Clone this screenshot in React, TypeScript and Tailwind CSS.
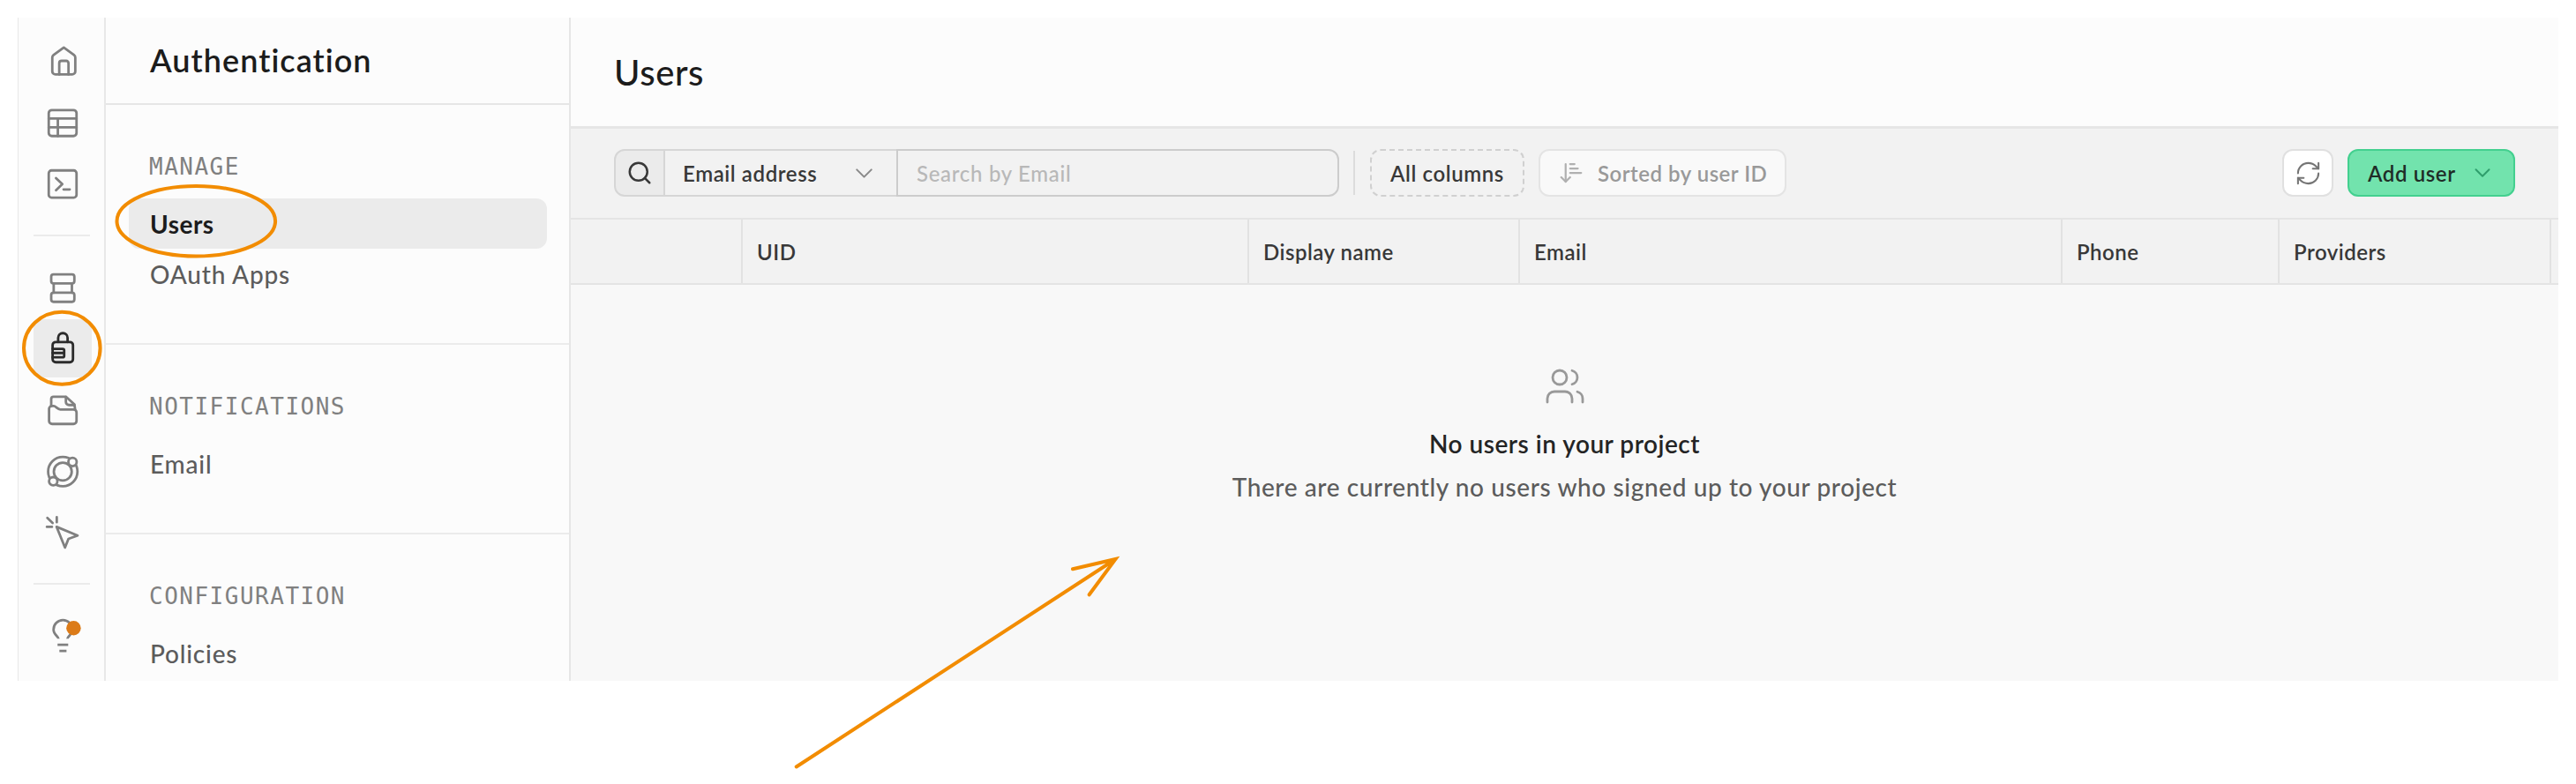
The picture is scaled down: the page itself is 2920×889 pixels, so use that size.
import React from "react";
import { ArrowDownNarrowWide, ChevronDown, RefreshCw, Search, Users } from "lucide-react";

type IconProps = { children: React.ReactNode; className?: string };

const RailIcon = ({ children, className = "text-[#808080]" }: IconProps) => (
  <svg
    viewBox="0 0 24 24"
    fill="none"
    stroke="currentColor"
    strokeWidth="1.6"
    strokeLinecap="round"
    strokeLinejoin="round"
    className={`h-[42px] w-[42px] ${className}`}
  >
    {children}
  </svg>
);

const Rail = () => (
  <nav className="flex w-[100px] shrink-0 flex-col items-center border-l border-r-2 border-[#e8e8e8] pt-[14px] pl-[3px]">
    <div className="flex h-[70px] items-center">
      <RailIcon>
        <path d="M5.3 9.8a2 2 0 0 1 .8-1.6l6.65-4.8 6.65 4.8a2 2 0 0 1 .8 1.6v9a2 2 0 0 1-2 2H7.3a2 2 0 0 1-2-2Z" />
        <path d="M9.8 20.8v-7.3A1.5 1.5 0 0 1 11.3 12h3a1.5 1.5 0 0 1 1.5 1.5v7.3" />
      </RailIcon>
    </div>
    <div className="flex h-[70px] items-center">
      <RailIcon>
        <rect x="3" y="3.9" width="18" height="16.8" rx="2" />
        <path d="M3 9.4h18M3 15.1h18M8.9 9.4v11.3" />
      </RailIcon>
    </div>
    <div className="flex h-[70px] items-center">
      <RailIcon>
        <rect x="3" y="3" width="18" height="17.6" rx="1.8" />
        <path d="m7.7 8 4.1 3.9-4.1 3.9M12.6 15.3h4" />
      </RailIcon>
    </div>
    <div className="mt-[22px] mr-0.5 mb-6 h-0.5 w-16 bg-[#ebebeb]" />
    <div className="flex h-[69px] items-center">
      <RailIcon>
        <rect x="4.6" y="2.9" width="15" height="5.9" rx="1.5" />
        <rect x="4.6" y="14.8" width="15" height="5.9" rx="1.5" />
        <path d="M6.2 8.8v6M18 8.8v6" />
      </RailIcon>
    </div>
    <div className="flex h-[69px] items-center">
      <div className="mb-0.5 flex h-[66px] w-[66px] items-center justify-center rounded-xl bg-[#ebebeb]">
        <RailIcon className="text-[#2b2b2b]">
          <rect x="5.5" y="7.9" width="13.2" height="13.1" rx="2" />
          <path d="M9.1 7.9V5.2a3.05 3.05 0 0 1 6.1 0v2.7" />
          <path d="M5.5 12.3H12a1 1 0 0 1 1 1v3.5a1 1 0 0 1-1 1H5.5M5.5 15H13" />
        </RailIcon>
      </div>
    </div>
    <div className="flex h-[69px] items-center">
      <RailIcon>
        <path d="M4.6 9.4V4.8a1.5 1.5 0 0 1 1.5-1.5h8l5.5 5 .5 3.2" />
        <path d="M14.1 3.5v3.2a2 2 0 0 0 2 2h3.5" />
        <path d="M3.2 11.2A1.8 1.8 0 0 1 5 9.4h1.2c1.5 0 2.3 2.2 4.3 2.2H19a2 2 0 0 1 2 2V19a2 2 0 0 1-2 2H5.2a2 2 0 0 1-2-2Z" />
      </RailIcon>
    </div>
    <div className="flex h-[69px] items-center">
      <RailIcon>
        <circle cx="12.1" cy="12.4" r="9.5" />
        <circle cx="12.1" cy="12.4" r="5.8" />
        <circle cx="18.4" cy="6.2" r="2.7" fill="#fcfcfc" />
        <circle cx="5.9" cy="18.7" r="2.7" fill="#fcfcfc" />
      </RailIcon>
    </div>
    <div className="flex h-[69px] items-center">
      <RailIcon>
        <path d="m8.1 8.8 13.6 5.6-5.9 2.2-2.3 5.6Z" />
        <path d="M8.2 2.5v3.3M2.1 3l3.4 3.3M1.8 8.8h3.3" />
      </RailIcon>
    </div>
    <div className="mt-6 mr-0.5 mb-[22px] h-0.5 w-16 bg-[#ebebeb]" />
    <div className="flex h-[69px] items-center">
      <RailIcon>
        <path d="M9.3 14.4c0-1.3-3.2-2.8-3.2-5.9a6.1 6.1 0 0 1 12.2 0c0 3.1-3.2 4.6-3.2 5.9" strokeLinecap="butt" />
        <path d="M8.7 18.3h6.9M9.9 22.3h4.6" strokeLinecap="butt" />
        <circle cx="19.1" cy="7.6" r="4.7" fill="#dc7b18" stroke="none" />
      </RailIcon>
    </div>
  </nav>
);

const sections = [
  { title: "MANAGE", items: ["Users", "OAuth Apps"], active: "Users" },
  { title: "NOTIFICATIONS", items: ["Email"] },
  { title: "CONFIGURATION", items: ["Policies"] },
];

const ProductMenu = () => (
  <aside className="w-[527px] shrink-0 border-r-2 border-[#e6e6e6]">
    <h1 className="flex h-[99px] items-center border-b-2 border-[#e6e6e6] pb-0.5 pl-[50px] text-[36px] font-semibold tracking-[1.05px] text-[#1c1c1c]">
      Authentication
    </h1>
    {sections.map((section) => (
      <div key={section.title} className="border-b-2 border-[#ebebeb] pt-[52px] pr-[25px] pb-[50px] pl-[26px]">
        <p className="mb-[18px] h-9 pl-[23px] font-['DejaVu_Sans_Mono',monospace] text-[26px] leading-9 font-normal tracking-[1.5px] text-[#808080]">
          {section.title}
        </p>
        {section.items.map((item) => (
          <p
            key={item}
            className={`flex h-[57px] items-center rounded-xl pl-6 text-[28px] ${
              item === section.active
                ? "bg-[#ebebeb] font-bold tracking-[0.5px] text-[#1c1c1c]"
                : "tracking-[0.8px] text-[#5c5c5c]"
            }`}
          >
            {item}
          </p>
        ))}
      </div>
    ))}
  </aside>
);

const Toolbar = () => (
  <div className="flex h-[103px] shrink-0 items-start border-b-2 border-[#e4e4e4] bg-[#f2f2f2] px-[49px] pt-[23px] text-[24px] font-semibold tracking-[0.6px] text-[#383838]">
    <div className="flex h-[54px]">
      <div className="flex w-[58px] items-center justify-center rounded-l-xl border-2 border-[#d6d6d6] bg-[#ebebeb]">
        <Search className="h-[30px] w-[30px]" strokeWidth={2} />
      </div>
      <div className="flex w-[262px] items-center justify-between border-y-2 border-[#d6d6d6] pr-5 pl-5">
        <span className="pt-0.5">Email address</span>
        <ChevronDown className="h-[33px] w-[33px] text-[#8a8a8a]" strokeWidth={1.5} />
      </div>
      <div className="flex w-[502px] items-center rounded-r-xl border-2 border-[#cccccc] pt-0.5 pl-[21px] font-medium tracking-[0.7px] text-[#b8b8b8]">
        Search by Email
      </div>
    </div>
    <div className="mr-[17px] ml-4 mt-0.5 h-[50px] w-0.5 bg-[#dcdcdc]" />
    <button className="flex h-[54px] w-[175px] items-center justify-center rounded-xl border-2 border-dashed border-[#d0d0d0] pt-0.5">
      All columns
    </button>
    <button className="ml-4 flex h-[54px] w-[281px] items-center rounded-xl border-2 border-[#e4e4e4] bg-[#f9f9f9] pl-5 text-[#999]">
      <ArrowDownNarrowWide className="mr-[15px] h-[30px] w-[30px] text-[#b0b0b0]" strokeWidth={1.8} />
      <span className="pt-0.5 tracking-[0.5px]">Sorted by user ID</span>
    </button>
    <button className="ml-auto flex h-[54px] w-[58px] items-center justify-center rounded-xl border-2 border-[#e0e0e0] bg-white">
      <RefreshCw className="h-[31px] w-[31px] text-[#757575]" strokeWidth={1.6} />
    </button>
    <button className="ml-4 flex h-[54px] w-[190px] items-center justify-between rounded-xl border-2 border-[#43d08f] bg-[#72e3ad] pr-5 pl-[21px] text-[#1f2d27]">
      <span className="pt-0.5">Add user</span>
      <ChevronDown className="h-[30px] w-[30px] text-[#2f9e6c]" strokeWidth={1.6} />
    </button>
  </div>
);

const columns = [
  { label: "", width: "w-[195px]" },
  { label: "UID", width: "w-[574px]" },
  { label: "Display name", width: "w-[307px]" },
  { label: "Email", width: "w-[615px]" },
  { label: "Phone", width: "w-[246px]" },
  { label: "Providers", width: "w-[308px]" },
];

// hand drawn highlights on top of the dashboard
const Annotations = () => (
  <svg
    viewBox="0 0 2920 889"
    fill="none"
    stroke="#f28c00"
    strokeWidth="4"
    strokeLinecap="round"
    className="pointer-events-none absolute inset-0 h-[889px] w-[2920px]"
  >
    <ellipse cx="222.3" cy="250.7" rx="89.8" ry="39.8" />
    <ellipse cx="70.3" cy="394.7" rx="43.3" ry="41" />
    <path d="M902.7 869.5 1264.5 634M1216 645.3l48.5-11.3-29.8 40.3" />
  </svg>
);

const App = () => {
  return (
    <main className="relative h-[889px] w-[2920px] overflow-hidden bg-white pt-5 pl-5 font-[Lato,sans-serif] font-medium">
      <div className="flex h-[752px] w-[2880px] overflow-hidden bg-[#fcfcfc]">
        <Rail />
        <ProductMenu />
        <section className="flex min-w-0 grow flex-col bg-[#f8f8f8]">
          <h2 className="flex h-[126px] shrink-0 items-center border-b-[3px] border-[#e6e6e6] bg-[#fcfcfc] pl-[49px] text-[40px] tracking-[0.6px] text-[#1c1c1c]">
            Users
          </h2>
          <Toolbar />
          <div className="flex h-[74px] shrink-0 border-b-2 border-[#e4e4e4] bg-[#f2f2f2] text-[24px] font-semibold tracking-[0.5px] text-[#383838]">
            {columns.map((column) => (
              <div
                key={column.label}
                className={`flex shrink-0 items-center border-r-2 border-[#e2e2e2] pt-0.5 pl-4 ${column.width}`}
              >
                {column.label}
              </div>
            ))}
          </div>
          <div className="mt-[91px] flex flex-col items-center text-[28px]">
            <Users className="mb-4 h-12 w-12 text-[#999]" strokeWidth={1.4} />
            <p className="flex h-[50px] items-center font-semibold tracking-[0.5px] text-[#242424]">
              No users in your project
            </p>
            <p className="flex h-12 items-center tracking-[0.6px] text-[#5c5c5c]">
              There are currently no users who signed up to your project
            </p>
          </div>
        </section>
      </div>
      <Annotations />
    </main>
  );
};

export default App;
